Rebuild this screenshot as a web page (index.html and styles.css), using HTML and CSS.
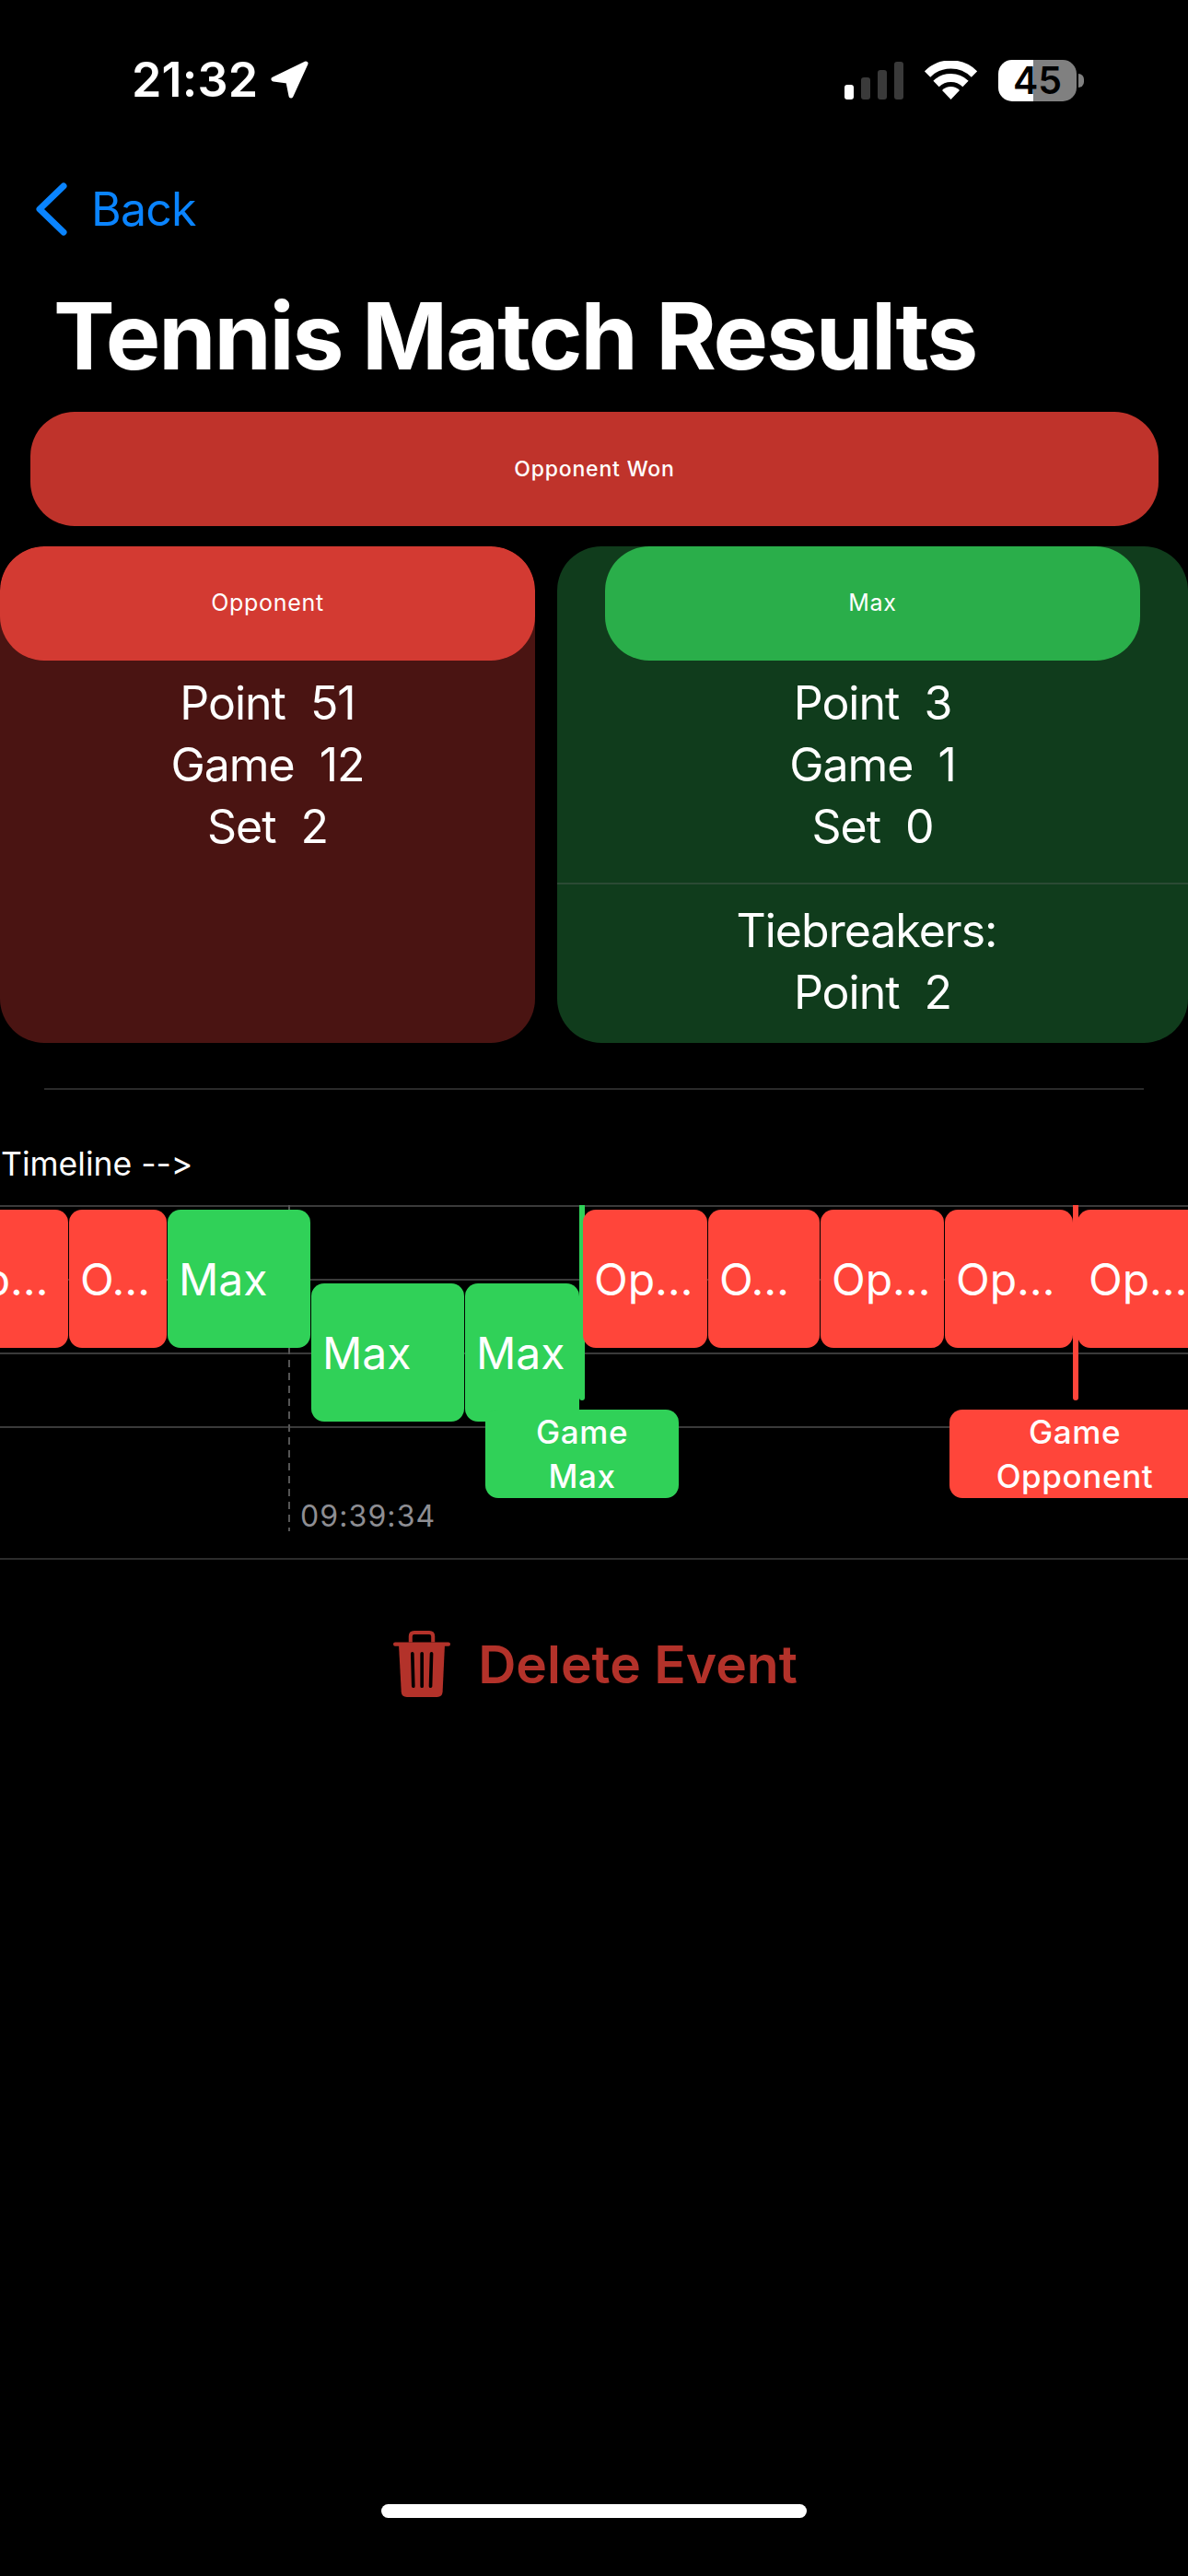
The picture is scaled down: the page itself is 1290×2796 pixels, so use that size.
FILE: index.html
```html
<!DOCTYPE html>
<html lang="en">
<head>
    <meta charset="UTF-8">
    <meta name="viewport" content="width=device-width, initial-scale=1.0">
    <title>Tennis Match Results</title>
    <link rel="stylesheet" href="styles.css">
</head>
<body>
    <div class="page">
        <!-- Status bar -->
        <header class="status-bar">
            <div class="status-left">
                <span class="clock">21:32</span>
                <svg class="location-icon" viewBox="295 67 42 42" aria-hidden="true">
                    <path d="M333 70 L298 87 L313 89 Q314 89 314 90 L317 105 Z" fill="#fff" stroke="#fff" stroke-width="5" stroke-linejoin="round"/>
                </svg>
            </div>
            <div class="status-right">
                <div class="signal">
                    <span class="signal-bar bar-on signal-1"></span>
                    <span class="signal-bar signal-2"></span>
                    <span class="signal-bar signal-3"></span>
                    <span class="signal-bar signal-4"></span>
                </div>
                <svg class="wifi-icon" viewBox="0 0 57 42" aria-hidden="true">
                    <path d="M3 14.5 A36 36 0 0 1 54 14.5" fill="none" stroke="#fff" stroke-width="9"/>
                    <path d="M12.5 25 A23 23 0 0 1 44.500 25" fill="none" stroke="#fff" stroke-width="9"/>
                    <path d="M19 32 A13.500 13.500 0 0 1 38 32 L28.500 42 Z" fill="#fff"/>
                </svg>
                <div class="battery">
                    <div class="battery-body">45</div>
                    <div class="battery-nub"></div>
                </div>
            </div>
        </header>

        <nav class="nav-bar">
            <svg class="back-icon" viewBox="0 0 36 58" aria-hidden="true">
                <path d="M31 4 L5 29 L31 54" fill="none" stroke="#0a84ff" stroke-width="7" stroke-linecap="round" stroke-linejoin="round"/>
            </svg>
            <span class="back-label">Back</span>
        </nav>

        <h1 class="page-title">Tennis Match Results</h1>

        <div class="result-banner">Opponent Won</div>

        <section class="score-cards">
            <div class="score-card card-opponent">
                <div class="card-header header-opponent">Opponent</div>
                <div class="stat-list">
                    <p class="stat"><span>Point</span><span>51</span></p>
                    <p class="stat"><span>Game</span><span>12</span></p>
                    <p class="stat"><span>Set</span><span>2</span></p>
                </div>
            </div>
            <div class="score-card card-max">
                <div class="card-header header-max">Max</div>
                <div class="stat-list">
                    <p class="stat"><span>Point</span><span>3</span></p>
                    <p class="stat"><span>Game</span><span>1</span></p>
                    <p class="stat"><span>Set</span><span>0</span></p>
                </div>
                <div class="tiebreakers">
                    <p class="stat">Tiebreakers:&nbsp;</p>
                    <p class="stat"><span>Point</span><span>2</span></p>
                </div>
            </div>
        </section>

        <hr class="separator">

        <p class="timeline-label">Timeline --&gt;</p>

        <section class="chart">
            <div class="lane"></div>
            <div class="lane"></div>
            <div class="lane"></div>
            <div class="lane lane-last"></div>

            <div class="time-rule"></div>
            <span class="time-label">09:39:34</span>

            <div class="game-rule rule-max" style="left: 629px"></div>
            <div class="game-rule rule-opponent" style="left: 1165px"></div>

            <div class="bar bar-opponent lane-one" style="left: -67px; width: 141px">Op…</div>
            <div class="bar bar-opponent lane-one" style="left: 75px; width: 106px">O…</div>
            <div class="bar bar-max lane-one" style="left: 182px; width: 155px">Max</div>
            <div class="bar bar-max lane-two" style="left: 338px; width: 166px">Max</div>
            <div class="bar bar-max lane-two" style="left: 505px; width: 124px">Max</div>
            <div class="bar bar-opponent lane-one" style="left: 633px; width: 135px">Op…</div>
            <div class="bar bar-opponent lane-one" style="left: 769px; width: 121px">O…</div>
            <div class="bar bar-opponent lane-one" style="left: 891px; width: 134px">Op…</div>
            <div class="bar bar-opponent lane-one" style="left: 1026px; width: 139px">Op…</div>
            <div class="bar bar-opponent lane-one" style="left: 1170px; width: 170px">Op…</div>

            <div class="game-flag bar-max" style="left: 527px; width: 210px">Game<br>Max</div>
            <div class="game-flag bar-opponent" style="left: 1031px; width: 272px">Game<br>Opponent</div>
        </section>

        <div class="delete-row">
            <svg class="trash-icon" viewBox="85 90 185 215" aria-hidden="true">
                <path d="M141 127 V108 Q141 96 153 96 H202 Q214 96 214 108 V127" fill="none" stroke="#b3322a" stroke-width="12"/>
                <rect x="85" y="127" width="185" height="13" rx="6" fill="#b3322a"/>
                <path d="M103 138 H252 L245 288 Q244 305 227 305 H129 Q112 305 111 288 Z" fill="#b3322a"/>
                <path d="M147 164 L150 270 M178 164 V270 M209 164 L206 270" stroke="#000" stroke-width="11" stroke-linecap="round"/>
            </svg>
            <span class="delete-label">Delete Event</span>
        </div>

        <div class="home-indicator"></div>
    </div>
</body>
</html>
```

FILE: styles.css
```css
body {
    margin: 0;
    background: #000;
    color: #fff;
    font-family: 'Inter', 'Liberation Sans', sans-serif;
    font-feature-settings: 'calt' 0;
}

.page {
    width: 1290px;
    height: 2796px;
    display: flex;
    flex-direction: column;
    overflow: hidden;
}

/* Status bar */
.status-bar {
    height: 50px;
    margin-top: 62px;
    display: flex;
    justify-content: space-between;
    align-items: center;
    padding: 0 113px 0 143px;
}

.status-left {
    display: flex;
    align-items: center;
    gap: 14px;
}

.clock {
    font-size: 52px;
    font-weight: 600;
    line-height: 50px;
    letter-spacing: 0.2px;
}

.location-icon {
    width: 42px;
    height: 42px;
}

.status-right {
    display: flex;
    align-items: center;
}

.signal {
    display: flex;
    align-items: flex-end;
    gap: 8px;
    height: 42px;
}

.signal-bar {
    width: 10px;
    border-radius: 3px;
    background: #3a3a3a;
}

.bar-on { background: #fff; }
.signal-1 { height: 16px; }
.signal-2 { height: 24px; }
.signal-3 { height: 32px; }
.signal-4 { height: 41px; }

.wifi-icon {
    width: 57px;
    height: 42px;
    margin-left: 23px;
}

.battery {
    display: flex;
    align-items: center;
    gap: 2px;
    margin-left: 23px;
}

.battery-body {
    width: 85px;
    height: 45px;
    border-radius: 15px;
    background: linear-gradient(90deg, #fff 45%, #808080 45%);
    color: #000;
    font-size: 41px;
    font-weight: 600;
    line-height: 45px;
    text-align: center;
}

.battery-nub {
    width: 6px;
    height: 15px;
    border-radius: 0 8px 8px 0;
    background: #808080;
}

/* Nav and title */
.nav-bar {
    height: 60px;
    margin-top: 85px;
    padding-left: 38px;
    display: flex;
    align-items: center;
    gap: 25px;
}

.back-icon {
    width: 36px;
    height: 58px;
}

.back-label {
    color: #0a84ff;
    font-size: 50px;
    line-height: 60px;
    letter-spacing: -0.8px;
}

.page-title {
    margin: 58px 0 0 58px;
    font-size: 100px;
    font-weight: 700;
    line-height: 100px;
    letter-spacing: -2.1px;
}

.result-banner {
    height: 124px;
    margin: 32px 32px 0 33px;
    border-radius: 48px;
    background: #bf332b;
    display: flex;
    justify-content: center;
    align-items: center;
    font-size: 23px;
    font-weight: 500;
    letter-spacing: 0.8px;
}

/* Score cards */
.score-cards {
    display: grid;
    grid-template-columns: 581px 685px;
    gap: 24px;
    height: 539px;
    margin-top: 22px;
}

.score-card {
    border-radius: 48px;
    overflow: hidden;
}

.card-opponent { background: #4a1412; }
.card-max { background: #103c1c; }

.card-header {
    width: 581px;
    height: 124px;
    box-sizing: border-box;
    padding-bottom: 2px;
    border-radius: 48px;
    display: flex;
    justify-content: center;
    align-items: center;
    font-size: 25px;
    letter-spacing: 0.7px;
}

.header-opponent { background: #d33a32; }

.header-max {
    margin-left: 52px;
    background: #2aae4a;
}

.stat-list {
    padding-top: 13px;
}

.stat {
    margin: 0;
    height: 67px;
    display: flex;
    justify-content: center;
    align-items: center;
    gap: 27px;
    font-size: 50px;
    line-height: 67px;
    letter-spacing: -1px;
}

.tiebreakers {
    margin-top: 27px;
    padding-top: 17px;
    border-top: 2px solid #2b4a34;
}

/* Timeline */
.separator {
    width: 1194px;
    height: 2px;
    margin: 49px 0 0 48px;
    border: 0;
    background: #2a2a2a;
}

.timeline-label {
    margin: 61px 0 0 1px;
    font-size: 35.5px;
    line-height: 40px;
}

.chart {
    position: relative;
    height: 385px;
    margin-top: 24px;
    border-bottom: 2px solid #2c2c2c;
    box-sizing: border-box;
}

.lane {
    height: 80px;
    box-sizing: border-box;
    border-top: 2px solid #3a3a3a;
}

.time-rule {
    position: absolute;
    left: 313px;
    top: 0;
    width: 2px;
    height: 354px;
    background: repeating-linear-gradient(#555 0 8px, transparent 8px 14px);
}

.time-label {
    position: absolute;
    left: 326px;
    top: 318px;
    color: #8e8e93;
    font-size: 32px;
    line-height: 40px;
    letter-spacing: 1.1px;
}

.game-rule {
    position: absolute;
    top: 0;
    width: 6px;
    height: 212px;
    border-radius: 0 0 3px 3px;
}

.rule-max { background: #30d158; }
.rule-opponent { background: #ff453a; }

.bar {
    position: absolute;
    height: 150px;
    box-sizing: border-box;
    padding-left: 12px;
    border-radius: 14px;
    display: flex;
    align-items: center;
    font-size: 48px;
    white-space: nowrap;
}

.bar-opponent { background: #ff453a; }
.bar-max { background: #30d158; }
.lane-one { top: 5px; }
.lane-two { top: 85px; }

.game-flag {
    position: absolute;
    top: 222px;
    height: 96px;
    border-radius: 14px;
    display: flex;
    align-items: center;
    justify-content: center;
    text-align: center;
    font-size: 35px;
    font-weight: 500;
    line-height: 48px;
    letter-spacing: 0.6px;
}

/* Delete button */
.delete-row {
    display: flex;
    justify-content: center;
    align-items: center;
    gap: 30px;
    height: 72px;
    margin-top: 77px;
    padding-left: 3px;
}

.trash-icon {
    width: 62px;
    height: 72px;
}

.delete-label {
    color: #b3322a;
    font-size: 57px;
    font-weight: 600;
}

.home-indicator {
    width: 462px;
    height: 15px;
    margin: auto 0 63px 414px;
    border-radius: 8px;
    background: #fff;
}
```
